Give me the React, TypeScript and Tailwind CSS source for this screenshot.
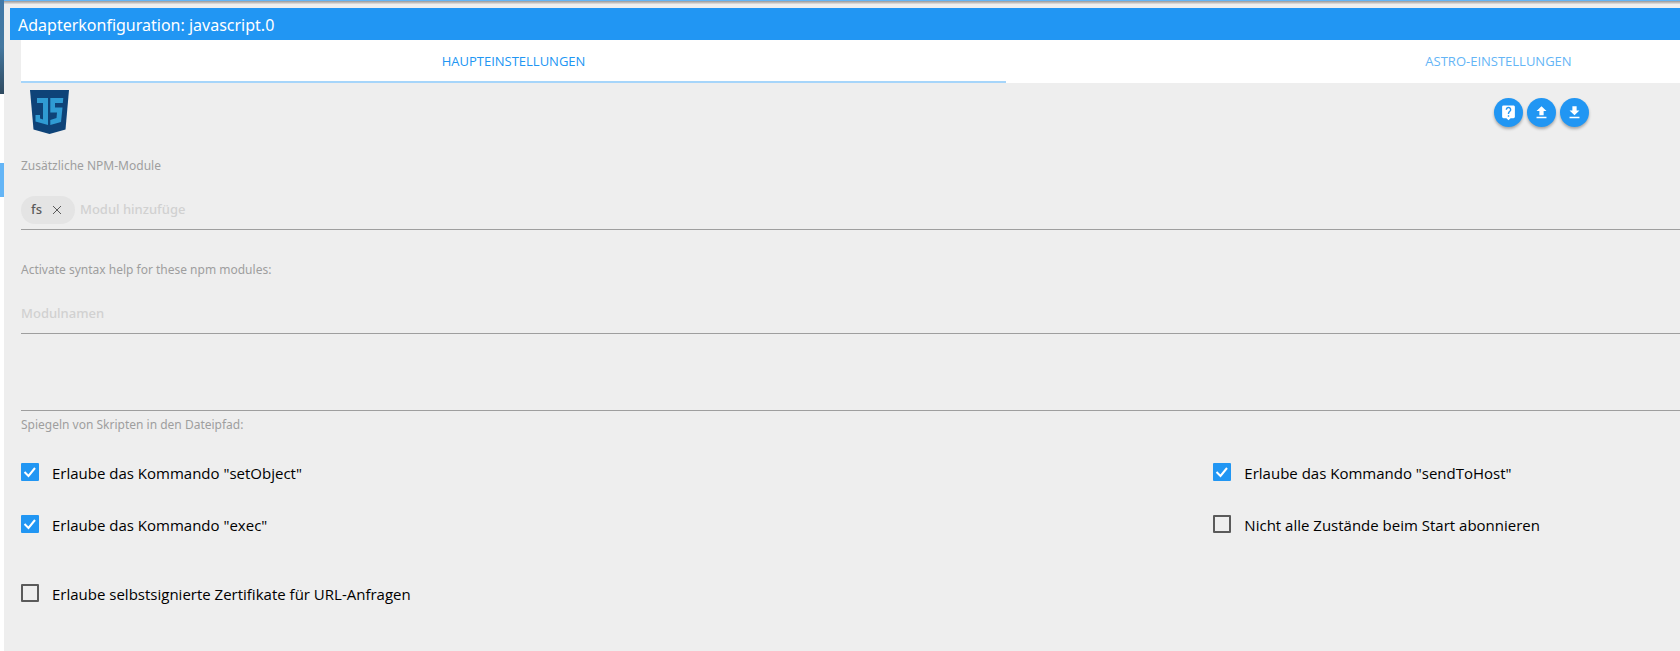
import { useState } from 'react';

const TABS = ['Haupteinstellungen', 'Astro-Einstellungen'];

function Logo() {
  return (
    <svg viewBox="0 0 39 44" className="ml-[9px] h-11 w-[39px]" role="img" aria-label="javascript">
      <path d="M0 0H39L35.5 39.5L19.5 44L3.5 39.5Z" fill="#0e4378" />
      <path d="M7 8H18V35L5.500 31.500V25H10V28.500L13 29.500V13H7ZM20.300 8H33.300L32.800 13H25V17.500H32.500L31 32L20.300 35V30L26.500 28L27 22.500H20.300Z" fill="#2f9bd3" />
    </svg>
  );
}

const ACTIONS = [
  {
    label: 'Hilfe',
    path: 'M19 2H5a2 2 0 0 0-2 2v14a2 2 0 0 0 2 2h4l3 3 3-3h4c1.100 0 2-.9 2-2V4c0-1.100-.9-2-2-2zm-6 16h-2v-2h2v2zm2.070-7.750-.9.920C13.450 11.900 13 12.500 13 14h-2v-.5c0-1.100.450-2.100 1.170-2.830l1.240-1.260c.370-.360.590-.860.590-1.410 0-1.100-.9-2-2-2s-2 .9-2 2H8c0-2.210 1.790-4 4-4s4 1.790 4 4c0 .880-.360 1.680-.930 2.250z',
  },
  { label: 'Laden', path: 'M9 16h6v-6h4l-7-7-7 7h4zm-4 2h14v2H5z' },
  { label: 'Speichern', path: 'M19 9h-4V3H9v6H5l7 7 7-7zM5 18v2h14v-2H5z' },
];

type CheckProps = { id: string; label: string; checked?: boolean };

function Check({ id, label, checked }: CheckProps) {
  return (
    <label
      htmlFor={id}
      className="flex items-start gap-[13px] font-['Open_Sans',sans-serif] text-[15px] leading-5 text-black"
    >
      <span className="relative block size-[18px]">
        <input
          id={id}
          type="checkbox"
          defaultChecked={checked}
          className="peer block size-[18px] appearance-none rounded-[1px] border-2 border-[#5a5a5a] checked:border-[#2196f3] checked:bg-[#2196f3]"
        />
        <svg viewBox="0 0 18 18" className="pointer-events-none absolute inset-0 hidden peer-checked:block">
          <path d="M3.500 9L7.500 13L14 5" fill="none" stroke="#fff" strokeWidth="2" />
        </svg>
      </span>
      {label}
    </label>
  );
}

export default function App() {
  const [tab, setTab] = useState(0);
  return (
    <div className="flex min-h-screen overflow-hidden bg-[#eee] font-['Noto_Sans',sans-serif]">
      <div className="flex w-1 shrink-0 flex-col bg-white">
        <div className="h-[94px] bg-linear-to-b from-[#3f78a8] via-[#4478a0] to-[#2f4a60]" />
        <div className="mt-[69px] h-[34px] bg-[#64b5f6]" />
      </div>

      <div className="min-w-0 flex-1">
        <div className="h-px bg-[#64b5f6]" />
        <div className="h-[7px] bg-linear-to-b from-[#999] to-[#eee] to-50%" />
        <header className="ml-[6px] bg-[#2196f3] px-2 pt-[5px] pb-[3px]">
          <h1 className="text-base leading-6 text-white">Adapterkonfiguration: javascript.0</h1>
        </header>

        <div className="ml-[17px] w-[calc(100%+294px)]">
          <div role="tablist" className="grid grid-cols-2 bg-white font-['Open_Sans',sans-serif]">
            {TABS.map((name, i) => (
              <button
                key={name}
                type="button"
                role="tab"
                aria-selected={tab === i}
                onClick={() => setTab(i)}
                className={
                  tab === i
                    ? 'h-[43px] border-b-2 border-[#a6d5fa] pt-[3px] text-[13px] text-[#2196f3] uppercase'
                    : 'h-[43px] border-b-2 border-transparent pt-[3px] text-[13px] text-[#64b5f6] uppercase'
                }
              >
                {name}
              </button>
            ))}
          </div>

          <div className="flex items-start justify-between pt-[7px] pr-[402px]">
            <Logo />
            <div className="flex gap-1 pt-2">
              {ACTIONS.map((a) => (
                <button
                  key={a.label}
                  type="button"
                  aria-label={a.label}
                  className="flex size-[29px] items-center justify-center rounded-full bg-[#2196f3] shadow-[0_2px_3px_rgba(0,0,0,0.3)]"
                >
                  <svg viewBox="0 0 24 24" className="size-[17px] fill-white">
                    <path d={a.path} />
                  </svg>
                </button>
              ))}
            </div>
          </div>

          <label htmlFor="libs" className="mt-[22px] block text-[12px] leading-5 text-[#9e9e9e]">
            Zusätzliche NPM-Module
          </label>
          <div className="mt-5 flex h-[34px] items-start gap-[5px] border-b border-[#9e9e9e]">
            <span className="flex h-7 items-center gap-[10px] rounded-full bg-[#e4e4e4] pr-[13px] pl-[10px] text-[13px] font-medium text-[#5a5a5a]">
              fs
              <button type="button" aria-label="fs entfernen">
                <svg viewBox="0 0 10 10" className="size-[10px]">
                  <path d="M1 1L9 9M9 1L1 9" stroke="#5a5a5a" />
                </svg>
              </button>
            </span>
            <input
              id="libs"
              placeholder="Modul hinzufüge"
              className="h-[26px] flex-1 bg-transparent text-[13px] font-medium outline-none placeholder:text-[#d1d1d1]"
            />
          </div>

          <label htmlFor="typings" className="mt-[30px] block text-[12px] leading-5 text-[#9e9e9e]">
            Activate syntax help for these npm modules:
          </label>
          <div className="mt-5 h-[34px] border-b border-[#9e9e9e]">
            <input
              id="typings"
              placeholder="Modulnamen"
              className="block h-[26px] w-full bg-transparent text-[13px] font-medium outline-none placeholder:text-[#d1d1d1]"
            />
          </div>

          <div className="mt-8 flex flex-col">
            <input id="mirror" className="h-[45px] border-b border-[#9e9e9e] bg-transparent text-[14px] outline-none" />
            <label htmlFor="mirror" className="mt-1 text-[12px] leading-5 text-[#9e9e9e]">
              Spiegeln von Skripten in den Dateipfad:
            </label>
          </div>

          <div className="mt-7 grid grid-cols-[23fr_15fr] gap-y-8">
            <Check id="set-object" label={'Erlaube das Kommando "setObject"'} checked />
            <Check id="send-to-host" label={'Erlaube das Kommando "sendToHost"'} checked />
            <Check id="exec" label={'Erlaube das Kommando "exec"'} checked />
            <Check id="subscribe" label="Nicht alle Zustände beim Start abonnieren" />
          </div>
          <div className="mt-[49px]">
            <Check id="self-signed" label="Erlaube selbstsignierte Zertifikate für URL-Anfragen" />
          </div>
        </div>
      </div>
    </div>
  );
}
